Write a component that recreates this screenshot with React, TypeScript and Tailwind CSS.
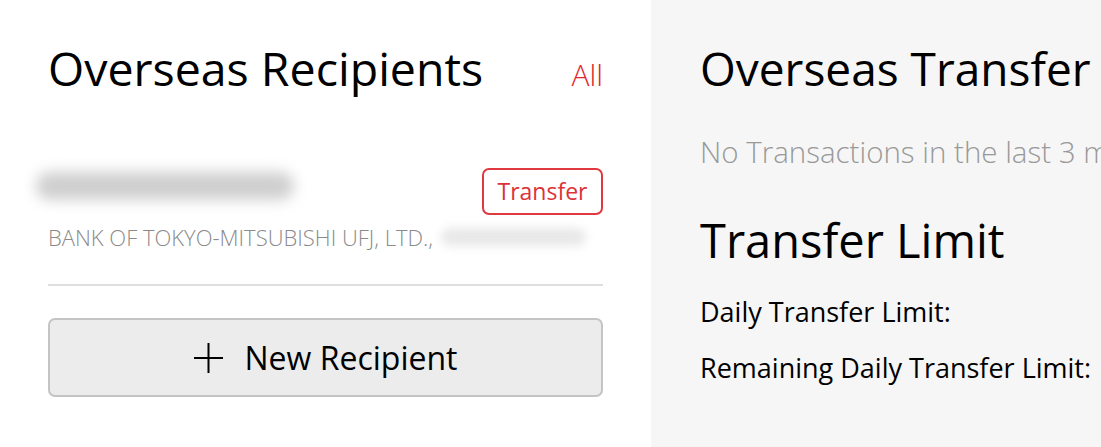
export default function App() {
  return (
    <div
      className="flex w-[1101px] h-[447px] overflow-hidden bg-white"
      style={{ fontFamily: '"Open Sans", "Noto Sans", sans-serif' }}
    >
      {/* Recipients column */}
      <div className="w-[651px] shrink-0 bg-white pl-12 pr-12 pt-[40px]">
        <div className="flex items-baseline justify-between">
          <h1 className="text-[46.5px] leading-[56px] text-black">Overseas Recipients</h1>
          <a className="text-[30px] font-light text-[#e0262c]">All</a>
        </div>

        <div className="mt-[71px] flex items-start justify-between">
          <div className="-ml-3 mt-[4px] h-[28px] w-[258px] rounded-full bg-[#cfcfcf] blur-[7px]" />
          <button className="h-[47px] w-[121px] rounded-[7px] border-2 border-[#e0393f] text-[23px] text-[#dc3238]">
            Transfer
          </button>
        </div>
        <div className="mt-[8px] flex items-center gap-[8px]">
          <span className="text-[22px] leading-[28px] font-light uppercase text-[#8a8a8a]">
            BANK OF TOKYO-MITSUBISHI UFJ, LTD.,
          </span>
          <div className="h-[18px] w-[145px] rounded-full bg-[#e8e8e8] blur-[5px]" />
        </div>

        <div className="mt-[33px] h-[2px] bg-[#dedede]" />

        <button className="mt-[32px] flex h-[79px] w-full items-center justify-center gap-[22px] rounded-[7px] border-2 border-[#c4c4c4] bg-[#ececec] text-[32px] text-black">
          <svg width="29" height="30" viewBox="0 0 29 30" fill="none" stroke="black" strokeWidth="2">
            <path d="M14.5 0v30M0 15h29" />
          </svg>
          <span className="leading-[40px]">New Recipient</span>
        </button>
      </div>

      {/* Transfer summary column */}
      <div className="flex-1 overflow-hidden whitespace-nowrap bg-[#f6f6f6] pl-[49px] pt-[40px]">
        <h1 className="text-[46px] leading-[56px] text-black">Overseas Transfer</h1>
        <p className="mt-[37px] text-[29.5px] leading-[38px] font-light text-[#999999]">
          No Transactions in the last 3 months
        </p>
        <h2 className="mt-[41px] text-[47px] leading-[56px] font-medium text-black">Transfer Limit</h2>
        <p className="mt-[26px] text-[27px] leading-[36px] text-black">Daily Transfer Limit:</p>
        <p className="mt-[20px] text-[27px] leading-[36px] text-black">Remaining Daily Transfer Limit:</p>
      </div>
    </div>
  );
}
